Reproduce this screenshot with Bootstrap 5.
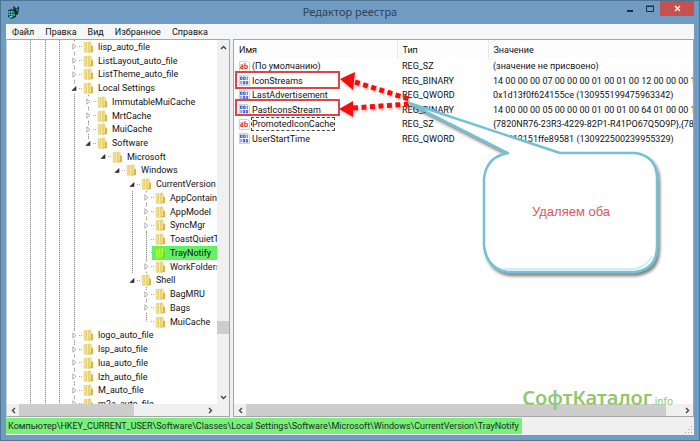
<!DOCTYPE html>
<html lang="ru">
<head>
<meta charset="utf-8">
<meta name="viewport" content="width=device-width, initial-scale=1">
<title>Редактор реестра</title>
<link href="https://cdn.jsdelivr.net/npm/bootstrap@5.3.0/dist/css/bootstrap.min.css" rel="stylesheet">
<style>
:root{--frame:#709bc3;--edge:#a3a6ab;--dots:repeating-linear-gradient(#8e8e8e 0 1px,#dedede 1px 2px)}
body{font:9px/14px Roboto,"Noto Sans",sans-serif;color:#111;background:var(--frame);overflow:hidden}
button{border:0;background:none;padding:0;color:inherit;font:inherit}
svg{display:block;flex:none}
.win{border:1px solid #4f7595;padding:0 5px 5px}
.titlebar{height:23px}
.titlebar h1{font-family:"Noto Sans",sans-serif;font-size:11px;line-height:22px;color:#2f4358}
.app-icon{left:1px;top:4px}
.controls{right:0;top:0;height:15px}
.controls button{width:20px;height:15px;display:flex;align-items:center;justify-content:center}
.controls .close-btn{width:34px;background:#c75050}
.menu{height:15px;background:#f5f6f7;padding-left:6px;gap:11px}
.panes{background:#eef0f4;min-height:0}
.tree-pane{flex:0 0 224px;min-width:0;border:1px solid var(--edge);border-left-color:#c8cdd5;background:#fff}
.list-pane{border:1px solid var(--edge);background:#fff;margin-left:3px;min-width:0}
.tree-view{min-height:0;min-width:0;overflow:hidden}
.tree{margin:0 0 -7px;padding:0;list-style:none;
 background:var(--dots) 23px 0/1px 100% no-repeat,var(--dots) 38px 0/1px 100% no-repeat,var(--dots) 52px 0/1px 100% no-repeat,var(--dots) 67px 0/1px 100% no-repeat}
.tree li{flex:1 1 0;min-height:0;display:flex;align-items:center;white-space:nowrap;padding-left:63px}
.tree .d1{padding-left:77px;background:var(--dots) 81px 0/1px 100% no-repeat}
.tree .d2{padding-left:92px}
.tree .d3{padding-left:106px}
.tree .d4{padding-left:121px}
.tree .d5{padding-left:135px;background:var(--dots) 139px 0/1px 100% no-repeat}
.tree .inner{background:var(--dots) 125px 0/1px 100% no-repeat,var(--dots) 139px 0/1px 100% no-repeat}
.tree .last{background-size:1px 50%}
.tree .twist{width:9px;height:9px}
.tree .stub{width:8px;flex:none}
.tree .label{padding-left:4px}
.tree .dash{width:4px;height:1px;flex:none;background:repeating-linear-gradient(90deg,#aaa 0 1px,#fff 1px 2px)}
.tree .stub + .dash{margin-left:1px}
.picked{background:#64f064;align-self:stretch;display:flex;align-items:center;flex:1;margin-left:-3px;padding-left:3px}
.picked svg{filter:hue-rotate(35deg) saturate(2)}
.vbar{width:12px;flex:none;background:#f0f0f0}
.hbar{height:12px;flex:none;background:#f0f0f0}
.sb{width:12px;height:12px;flex:none;display:flex;align-items:center;justify-content:center}
.vbar .sb{height:14px}
.thumb{background:#cdcdcd}
.tree-pane .hbar{padding-right:13px}
.tree-pane .hbar .thumb{flex:114}
.tree-pane .hbar .space{flex:70}
.vbar .space{flex:267}
.vbar .thumb{flex:13}
.vbar .rest{flex:56}
.list-pane .hbar .thumb{flex:417}
.list-pane .hbar .space{flex:15}
.list-view{min-height:0;overflow:hidden}
.values{table-layout:fixed;width:100%;height:106px;border-collapse:collapse}
.values th{font-weight:400;height:19px;padding:0 0 0 5px;border-right:1px solid #e8e8ea;background:#fdfdfe}
.values th:last-child{border-right:0}
.values td{padding:0 0 0 5px;white-space:nowrap;overflow:hidden;line-height:14px}
.values .cn{width:163px}
.values .ct{width:91px}
.values .nm{display:flex;align-items:center;gap:1px}
.values .nm span{padding:0 1px}
.values .focused{outline:1px dashed #444;outline-offset:-1px}
.statusbar{height:18px;background:#f0f0f0;padding:1px 0}
.statusbar .path{background:#7bee7b;padding:0 3px 0 2px;line-height:16px;color:#14301a}
.notes{left:0;top:0;pointer-events:none}
.note-text{font:13px "Liberation Sans",sans-serif;fill:#e25560}
.watermark{right:26px;bottom:26px;color:#92c76d;font:600 20px/26px "Noto Sans",sans-serif}
.watermark small{font-size:10px;font-weight:400}
</style>
<script src="https://cdn.jsdelivr.net/npm/bootstrap@5.3.0/dist/js/bootstrap.bundle.min.js"></script>
</head>
<body>
<svg width="0" height="0" class="position-absolute" aria-hidden="true">
<defs>
<linearGradient id="fg"><stop offset="0" stop-color="#f7eaa6"/><stop offset=".5" stop-color="#e9cf68"/><stop offset=".6" stop-color="#faf0b8"/><stop offset="1" stop-color="#dfc052"/></linearGradient>
<symbol id="folder" viewBox="0 0 11 12"><path d="M1 1.5h5l.6 9.8H1z" fill="url(#fg)" stroke="#e2c869" stroke-width=".5"/><path d="M6 .7l2.2.8v8L6.4 11.8z" fill="#f5e69c" stroke="#d9bb4e" stroke-width=".5"/><path d="M8 4.5l2 .5v6.2H6.6L8 9.5z" fill="#d8b748"/></symbol>
<symbol id="shut" viewBox="0 0 9 9"><path d="M2 0h5v9H2z" fill="#fff"/><path d="M2.8 1.8L6 4.5 2.8 7.2z" fill="#fff" stroke="#9a9a9a" stroke-width=".8"/></symbol>
<symbol id="open" viewBox="0 0 9 9"><path d="M1 0h7v9H1z" fill="#fff"/><path d="M6 2.5v4H2z" fill="#333" stroke="#222" stroke-width=".6"/></symbol>
<symbol id="str" viewBox="0 0 11 11"><path d="M.5.5h8l2 2v8H.5z" fill="#fff" stroke="#b9bdc4" stroke-width=".7"/><g fill="none" stroke="#d9412b" stroke-width="1.1"><path d="M1.5 4h2.3v4M3.8 5.7c-3-.4-3 2.2-.4 1.9M5.8 2v6M6 4.6c3.4-1 3.3 3.7 0 2.8"/></g></symbol>
<symbol id="bin" viewBox="0 0 11 11"><path d="M.5.5h8l2 2v8H.5z" fill="#fff" stroke="#b9bdc4" stroke-width=".7"/><g fill="none" stroke="#2a44cf" stroke-width=".9"><path d="M1.500 2h1.600v2.600H1.500zM4.600 2h1.600v2.600H4.600zM8.200 1.600v3.400M2 6v3.400M4.200 6.400h1.400V9H4.200zM7.200 6.400h1.500V9H7.200z"/></g></symbol>
</defs>
</svg>

<div class="win vh-100 d-flex flex-column position-relative">
<header class="titlebar position-relative flex-shrink-0">
<svg class="app-icon position-absolute" width="14" height="14" viewBox="0 0 14 14"><path d="M1 5l4-1 4 2v6l-4 2-4-2z" fill="#123f43"/><path d="M1.500 6h1.700v1.700H1.500zM4 6h1.700v1.700H4zM6.400 6.500h1.700v1.700H6.400zM1.500 8.500h1.700v1.700H1.500zM4 8.700h1.700v1.700H4zM6.400 9h1.700v1.700H6.400zM2.500 11h3v1.500h-3z" fill="#54dedc"/><path d="M6 1l2 1 1 2 3-3v3l-1 5-3 2-1-5z" fill="#10272b"/><path d="M9.500 4.500l1.500-1v2l-1.500 1z" fill="#2ea7a2"/></svg>
<h1 class="text-center m-0 fw-normal">Редактор реестра</h1>
<div class="controls position-absolute d-flex">
<button aria-label="Свернуть"><svg width="8" height="8"><path d="M1 5h6v2H1z" fill="#1c2c3c"/></svg></button>
<button aria-label="Развернуть"><svg width="8" height="8"><path d="M.5 1.500h7v5h-7zM0 1h8" fill="none" stroke="#1c2c3c"/></svg></button>
<button class="close-btn" aria-label="Закрыть"><svg width="7" height="7"><path d="M1 1l5 5M6 1L1 6" stroke="#fff" stroke-width="1.400"/></svg></button>
</div>
</header>
<nav class="menu d-flex flex-shrink-0"><button>Файл</button><button>Правка</button><button>Вид</button><button>Избранное</button><button>Справка</button></nav>

<main class="panes d-flex flex-grow-1">
<section class="tree-pane d-flex flex-column">
<div class="d-flex flex-grow-1 tree-view">
<div class="tree-view flex-grow-1 d-flex flex-column">
<ul class="tree d-flex flex-column flex-grow-1">
<li><svg class="twist"><use href="#shut"/></svg><i class="dash"></i><svg width="11" height="12"><use href="#folder"/></svg><span class="label">lisp_auto_file</span></li>
<li><svg class="twist"><use href="#shut"/></svg><i class="dash"></i><svg width="11" height="12"><use href="#folder"/></svg><span class="label">ListLayout_auto_file</span></li>
<li><svg class="twist"><use href="#shut"/></svg><i class="dash"></i><svg width="11" height="12"><use href="#folder"/></svg><span class="label">ListTheme_auto_file</span></li>
<li><svg class="twist"><use href="#open"/></svg><i class="dash"></i><svg width="11" height="12"><use href="#folder"/></svg><span class="label">Local Settings</span></li>
<li class="d1"><svg class="twist"><use href="#shut"/></svg><i class="dash"></i><svg width="11" height="12"><use href="#folder"/></svg><span class="label">ImmutableMuiCache</span></li>
<li class="d1"><svg class="twist"><use href="#shut"/></svg><i class="dash"></i><svg width="11" height="12"><use href="#folder"/></svg><span class="label">MrtCache</span></li>
<li class="d1"><svg class="twist"><use href="#shut"/></svg><i class="dash"></i><svg width="11" height="12"><use href="#folder"/></svg><span class="label">MuiCache</span></li>
<li class="d1 last"><svg class="twist"><use href="#open"/></svg><i class="dash"></i><svg width="11" height="12"><use href="#folder"/></svg><span class="label">Software</span></li>
<li class="d2"><svg class="twist"><use href="#open"/></svg><i class="dash"></i><svg width="11" height="12"><use href="#folder"/></svg><span class="label">Microsoft</span></li>
<li class="d3"><svg class="twist"><use href="#open"/></svg><i class="dash"></i><svg width="11" height="12"><use href="#folder"/></svg><span class="label">Windows</span></li>
<li class="d4"><svg class="twist"><use href="#open"/></svg><i class="dash"></i><svg width="11" height="12"><use href="#folder"/></svg><span class="label">CurrentVersion</span></li>
<li class="d5 inner"><svg class="twist"><use href="#shut"/></svg><i class="dash"></i><svg width="11" height="12"><use href="#folder"/></svg><span class="label">AppContainer</span></li>
<li class="d5 inner"><svg class="twist"><use href="#shut"/></svg><i class="dash"></i><svg width="11" height="12"><use href="#folder"/></svg><span class="label">AppModel</span></li>
<li class="d5 inner"><svg class="twist"><use href="#shut"/></svg><i class="dash"></i><svg width="11" height="12"><use href="#folder"/></svg><span class="label">SyncMgr</span></li>
<li class="d5 inner"><span class="stub"></span><i class="dash"></i><svg width="11" height="12"><use href="#folder"/></svg><span class="label">ToastQuietTime</span></li>
<li class="d5 inner"><span class="stub"></span><i class="dash"></i><span class="picked"><svg width="11" height="12"><use href="#folder"/></svg><span class="label">TrayNotify</span></span></li>
<li class="d5 inner"><svg class="twist"><use href="#shut"/></svg><i class="dash"></i><svg width="11" height="12"><use href="#folder"/></svg><span class="label">WorkFolders</span></li>
<li class="d4"><svg class="twist"><use href="#open"/></svg><i class="dash"></i><svg width="11" height="12"><use href="#folder"/></svg><span class="label">Shell</span></li>
<li class="d5"><svg class="twist"><use href="#shut"/></svg><i class="dash"></i><svg width="11" height="12"><use href="#folder"/></svg><span class="label">BagMRU</span></li>
<li class="d5"><svg class="twist"><use href="#shut"/></svg><i class="dash"></i><svg width="11" height="12"><use href="#folder"/></svg><span class="label">Bags</span></li>
<li class="d5 last"><span class="stub"></span><i class="dash"></i><svg width="11" height="12"><use href="#folder"/></svg><span class="label">MuiCache</span></li>
<li><svg class="twist"><use href="#shut"/></svg><i class="dash"></i><svg width="11" height="12"><use href="#folder"/></svg><span class="label">logo_auto_file</span></li>
<li><svg class="twist"><use href="#shut"/></svg><i class="dash"></i><svg width="11" height="12"><use href="#folder"/></svg><span class="label">lsp_auto_file</span></li>
<li><svg class="twist"><use href="#shut"/></svg><i class="dash"></i><svg width="11" height="12"><use href="#folder"/></svg><span class="label">lua_auto_file</span></li>
<li><svg class="twist"><use href="#shut"/></svg><i class="dash"></i><svg width="11" height="12"><use href="#folder"/></svg><span class="label">lzh_auto_file</span></li>
<li><svg class="twist"><use href="#shut"/></svg><i class="dash"></i><svg width="11" height="12"><use href="#folder"/></svg><span class="label">M_auto_file</span></li>
<li><svg class="twist"><use href="#shut"/></svg><i class="dash"></i><svg width="11" height="12"><use href="#folder"/></svg><span class="label">m2a_auto_file</span></li>
</ul>
</div>
<div class="vbar d-flex flex-column">
<button class="sb" aria-label="Вверх"><svg width="7" height="5"><path d="M1 4l2.500-2.500L6 4" fill="none" stroke="#444" stroke-width="1.400"/></svg></button>
<span class="space"></span><span class="thumb"></span><span class="rest"></span>
<button class="sb" aria-label="Вниз"><svg width="7" height="5"><path d="M1 1l2.500 2.500L6 1" fill="none" stroke="#444" stroke-width="1.400"/></svg></button>
</div>
</div>
<div class="hbar d-flex">
<button class="sb" aria-label="Влево"><svg width="5" height="7"><path d="M4 1L1.500 3.500 4 6" fill="none" stroke="#444" stroke-width="1.400"/></svg></button>
<span class="thumb"></span><span class="space"></span>
<button class="sb" aria-label="Вправо"><svg width="5" height="7"><path d="M1 1l2.500 2.500L1 6" fill="none" stroke="#444" stroke-width="1.400"/></svg></button>
</div>
</section>

<section class="list-pane d-flex flex-column flex-grow-1">
<div class="list-view flex-grow-1">
<table class="values">
<colgroup><col class="cn"><col class="ct"><col></colgroup>
<thead><tr><th scope="col">Имя</th><th scope="col">Тип</th><th scope="col">Значение</th></tr></thead>
<tbody>
<tr><td><div class="nm"><svg width="11" height="11"><use href="#str"/></svg><span>(По умолчанию)</span></div></td><td>REG_SZ</td><td>(значение не присвоено)</td></tr>
<tr><td><div class="nm"><svg width="11" height="11"><use href="#bin"/></svg><span>IconStreams</span></div></td><td>REG_BINARY</td><td>14 00 00 00 07 00 00 00 01 00 01 00 12 00 00 00 14 0</td></tr>
<tr><td><div class="nm"><svg width="11" height="11"><use href="#bin"/></svg><span>LastAdvertisement</span></div></td><td>REG_QWORD</td><td>0x1d13f0f624155ce (130955199475963342)</td></tr>
<tr><td><div class="nm"><svg width="11" height="11"><use href="#bin"/></svg><span>PastIconsStream</span></div></td><td>REG_BINARY</td><td>14 00 00 00 05 00 00 00 01 00 01 00 64 01 00 00 14 0</td></tr>
<tr><td><div class="nm"><svg width="11" height="11"><use href="#str"/></svg><span class="focused">PromotedIconCache</span></div></td><td>REG_SZ</td><td>{7820NR76-23R3-4229-82P1-R41PO67Q5O9P},{782</td></tr>
<tr><td><div class="nm"><svg width="11" height="11"><use href="#bin"/></svg><span>UserStartTime</span></div></td><td>REG_QWORD</td><td>0x1d12151ffe89581 (130922500239955329)</td></tr>
</tbody>
</table>
</div>
<div class="hbar d-flex">
<button class="sb" aria-label="Влево"><svg width="5" height="7"><path d="M4 1L1.500 3.500 4 6" fill="none" stroke="#444" stroke-width="1.400"/></svg></button>
<span class="thumb"></span><span class="space"></span>
<button class="sb" aria-label="Вправо"><svg width="5" height="7"><path d="M1 1l2.500 2.500L1 6" fill="none" stroke="#444" stroke-width="1.400"/></svg></button>
</div>
</section>
</main>

<footer class="statusbar d-flex justify-content-between flex-shrink-0">
<span class="path text-nowrap">Компьютер\HKEY_CURRENT_USER\Software\Classes\Local Settings\Software\Microsoft\Windows\CurrentVersion\TrayNotify</span>
<svg class="align-self-end" width="9" height="9"><path d="M6 1h1v1H6zM6 4h1v1H6zM3 4h1v1H3zM6 7h1v1H6zM3 7h1v1H3zM0 7h1v1H0z" fill="#aaa"/></svg>
</footer>

<div class="watermark position-absolute text-nowrap">СофтКаталог<small>.info</small></div>
<svg class="notes position-absolute" width="699" height="440" viewBox="1 1 699 440">
<defs><filter id="sh" x="-10%" y="-10%" width="125%" height="130%"><feDropShadow dx="2" dy="3" stdDeviation="1.500" flood-color="#333" flood-opacity=".6"/></filter>
<filter id="soft" x="-10%" y="-20%" width="125%" height="150%"><feDropShadow dx="1" dy="2" stdDeviation="1" flood-color="#555" flood-opacity=".35"/></filter></defs>
<g fill="none" stroke="#e0444b" stroke-width="2"><path d="M236 72h103v16H236zM236 100h103v15H236z"/></g>
<g filter="url(#soft)" fill="#f60a0a"><path d="M340 79l15-7-2 18zM339 109l14-8v16z"/><path d="M355 82l54 17M353 108l57-4" stroke="#f60a0a" stroke-width="5" stroke-dasharray="5 3.500"/></g>
<g filter="url(#sh)"><path d="M409 103L560 153h75q22 3 22 26v67q0 23-22 26H508q-21-3-24-26v-67q2-22 24-26z" fill="#fff" stroke="#72c2d4" stroke-width="2.500" stroke-linejoin="round"/></g>
<path d="M501 269h134q12-3 17-13" fill="none" stroke="#b9edf5" stroke-width="1.500"/>
<text class="note-text" x="532" y="216">Удаляем оба</text>
</svg>
</div>
</body>
</html>
